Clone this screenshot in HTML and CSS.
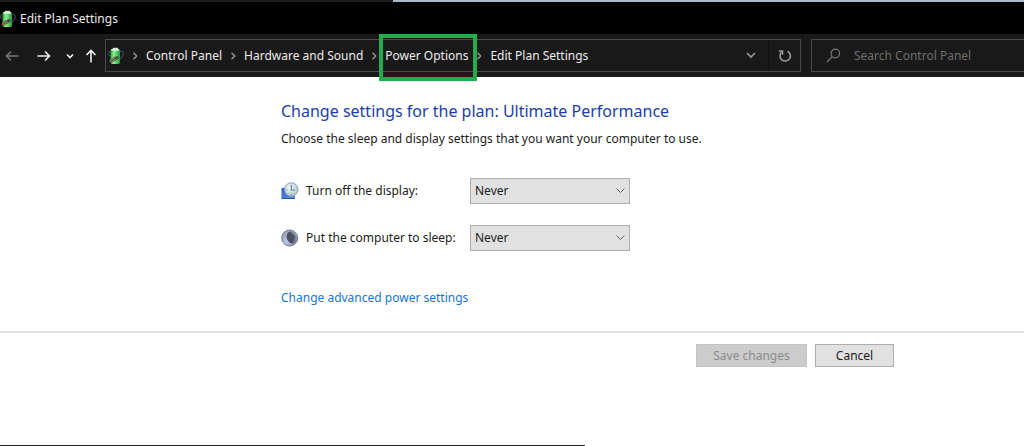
FILE: index.html
```html
<!DOCTYPE html>
<html lang="en">
<head>
<meta charset="utf-8">
<meta name="viewport" content="width=device-width, initial-scale=1">
<title>Edit Plan Settings</title>
<link rel="stylesheet" href="styles.css">
</head>
<body>
<svg class="defs" width="0" height="0" aria-hidden="true">
  <defs>
    <linearGradient id="cell" x1="0" x2="1" y1="0" y2="0">
      <stop offset="0" stop-color="#25a53a"/><stop offset=".35" stop-color="#8df094"/><stop offset="1" stop-color="#1f9a38"/>
    </linearGradient>
    <linearGradient id="screen" x1="0" x2="1" y1="0" y2="1">
      <stop offset="0" stop-color="#2e5fc9"/><stop offset="1" stop-color="#6a93e6"/>
    </linearGradient>
    <radialGradient id="face" cx=".4" cy=".35" r=".7">
      <stop offset="0" stop-color="#f4f9fb"/><stop offset="1" stop-color="#a9c0cf"/>
    </radialGradient>
    <linearGradient id="moon" x1="0" x2="1" y1="0" y2="1">
      <stop offset="0" stop-color="#8d93a8"/><stop offset=".5" stop-color="#b9c3e6"/><stop offset="1" stop-color="#7c86a6"/>
    </linearGradient>
    <symbol id="battery" viewBox="0 0 16 18">
      <path d="M11 5c3-2 5 0 4 3s-4 5-7 6M2 4C0 5 0 8 2 9" fill="none" stroke="#3c3c5a" stroke-width="1.3"/>
      <path d="M5 .8h5v2H5z" fill="#d9e6d9"/>
      <rect x="2.500" y="2" width="9.500" height="15" rx="1.800" fill="url(#cell)"/>
      <ellipse cx="7.200" cy="2.800" rx="4" ry="1.200" fill="#d4efd5"/>
      <path d="M1 14l5-4 4-1 1 2-4 3-5 2z" fill="#4d4a3d"/>
      <path d="M2 13.500l5-3M3 15l5-3" stroke="#aaa17c" stroke-width=".8"/>
    </symbol>
    <symbol id="chevron" viewBox="0 0 6 8">
      <path d="M1.500 .8L4.700 4 1.500 7.200" fill="none" stroke="currentColor" stroke-width="1.400"/>
    </symbol>
  </defs>
</svg>

<header class="titlebar">
  <svg class="battery" aria-hidden="true"><use href="#battery"/></svg>
  <span>Edit Plan Settings</span>
</header>

<nav class="toolbar" aria-label="Navigation">
  <button class="tool back" type="button" aria-label="Back" disabled><svg width="14" height="12" viewBox="0 0 14 12"><path d="M13.500 6H1.500M6 1.500L1.500 6 6 10.500"/></svg></button>
  <button class="tool forward" type="button" aria-label="Forward"><svg width="14" height="12" viewBox="0 0 14 12"><path d="M.5 6h12M8 1.500L12.500 6 8 10.500"/></svg></button>
  <button class="tool recent" type="button" aria-label="Recent locations"><svg width="8" height="6" viewBox="0 0 8 6"><path d="M1 1.500l3 3 3-3"/></svg></button>
  <button class="tool up" type="button" aria-label="Up"><svg width="12" height="14" viewBox="0 0 12 14"><path d="M6 13.500V1.500M1.500 6L6 1.500 10.500 6"/></svg></button>
  <div class="address">
    <svg class="battery" aria-hidden="true"><use href="#battery"/></svg>
    <ol class="crumbs">
      <li><svg class="chevron" aria-hidden="true"><use href="#chevron"/></svg><a href="#">Control Panel</a></li>
      <li><svg class="chevron" aria-hidden="true"><use href="#chevron"/></svg><a href="#">Hardware and Sound</a></li>
      <li><svg class="chevron" aria-hidden="true"><use href="#chevron"/></svg><a class="marked" href="#">Power Options</a></li>
      <li><svg class="chevron" aria-hidden="true"><use href="#chevron"/></svg><a href="#">Edit Plan Settings</a></li>
    </ol>
    <button class="tool history" type="button" aria-label="Previous locations"><svg width="10" height="7" viewBox="0 0 10 7"><path d="M1 1l4 4 4-4"/></svg></button>
    <button class="tool refresh" type="button" aria-label="Refresh"><svg width="14" height="14" viewBox="0 0 14 14"><path d="M9.500 2.200A5.200 5.200 0 1 1 3.500 3.200M.8 2h3.700v3.700"/></svg></button>
  </div>
  <label class="search">
    <svg width="15" height="15" viewBox="0 0 15 15" aria-hidden="true"><circle cx="9.300" cy="5.500" r="4.300"/><path d="M6.200 8.700L1 14"/></svg>
    <input type="search" placeholder="Search Control Panel" aria-label="Search Control Panel">
  </label>
</nav>

<main class="content">
  <form class="plan" id="plan">
    <h1>Change settings for the plan: Ultimate Performance</h1>
    <p class="intro">Choose the sleep and display settings that you want your computer to use.</p>
    <div class="setting">
      <svg width="18" height="18" viewBox="0 0 18 18" aria-hidden="true">
        <path d="M.5 6l13.500-1v12H.5z" fill="url(#screen)"/>
        <path d="M.5 16.500H14" stroke="#3557a8"/>
        <circle cx="10.300" cy="7.500" r="6.700" fill="url(#face)" stroke="#8ea2b2"/>
        <path d="M10.300 3v5H14" fill="none" stroke="#5f7d96" stroke-width="1.200"/>
        <path d="M5.300 7.500h1M10.300 12v1" stroke="#7890a4"/>
      </svg>
      <label for="display">Turn off the display:</label>
      <select id="display"><option>Never</option><option>5 minutes</option></select>
    </div>
    <div class="setting">
      <svg width="18" height="18" viewBox="0 0 18 18" aria-hidden="true">
        <circle cx="8.700" cy="9" r="8" fill="url(#moon)" stroke="#74798c"/>
        <ellipse cx="10.500" cy="8.500" rx="4.700" ry="6.200" fill="#4d5160" transform="rotate(-20 10.500 8.500)"/>
        <path d="M10 3.500c4 1 6 6 3 10" fill="none" stroke="#7f8391" stroke-width="1.500"/>
      </svg>
      <label for="sleep">Put the computer to sleep:</label>
      <select id="sleep"><option>Never</option><option>5 minutes</option></select>
    </div>
    <a class="advanced" href="#">Change advanced power settings</a>
  </form>
</main>

<footer class="actions">
  <button type="submit" form="plan" disabled>Save changes</button>
  <button class="cancel" type="button">Cancel</button>
</footer>
<div class="taskline"></div>
</body>
</html>
```

FILE: styles.css
```css
* { box-sizing: border-box; }

body {
  display: flex;
  flex-direction: column;
  min-height: 100vh;
  margin: 0;
  background: #fff;
  color: #1c1c1c;
  font: 12px/18px "Noto Sans", "Open Sans", sans-serif;
}

button, input, select { font: inherit; }
a { text-decoration: none; }
.defs { position: absolute; }
.battery { flex: none; width: 16px; height: 18px; }

.titlebar {
  display: flex;
  align-items: center;
  gap: 4px;
  height: 34px;
  padding-top: 3px;
  background: linear-gradient(90deg, #1c1c1c 393px, #a9b9cc 393px) top / 100% 2px no-repeat #000;
  color: #ececec;
}

.toolbar {
  display: flex;
  align-items: center;
  height: 43px;
  background: #191919;
  color: #ececec;
}

.tool {
  display: flex;
  flex: none;
  align-items: center;
  justify-content: center;
  height: 31px;
  padding: 0;
  border: 0;
  background: none;
  color: #f2f2f2;
}
.tool svg { fill: none; stroke: currentColor; stroke-width: 1.6; }
.back { width: 24px; color: #777; }
.forward { width: 40px; }
.recent { width: 12px; }
.up { width: 29px; }

.address {
  display: flex;
  flex: 1;
  align-items: center;
  height: 33px;
  padding-left: 2px;
  border: 1px solid #4a4a4a;
}

.crumbs {
  display: flex;
  flex: 1;
  margin: 0;
  padding: 0;
  list-style: none;
}
.crumbs li { display: flex; align-items: center; white-space: nowrap; }
.crumbs a { color: #ececec; }
.chevron { width: 6px; height: 8px; margin: 0 8px; color: #999; }
.marked { position: relative; }
.marked::after {
  content: "";
  position: absolute;
  inset: -13px -9px -16px -6px;
  border: 4px solid #22ac4b;
}

.history { width: 34px; color: #999; }
.refresh { width: 32px; border-left: 1px solid #111; color: #999; }

.search {
  display: flex;
  flex: 0 1 213px;
  align-items: center;
  gap: 13px;
  min-width: 0;
  height: 33px;
  margin-left: 10px;
  padding-left: 14px;
  border: 1px solid #4a4a4a;
  border-right: 0;
}
.search svg { flex: none; fill: none; stroke: #777; stroke-width: 1.2; }
.search input {
  flex: 1;
  min-width: 0;
  padding: 0;
  border: 0;
  outline: 0;
  background: none;
  color: #ececec;
}
.search input::placeholder { color: #6d6d6d; opacity: 1; }

.content {
  padding: 22px 24px 24px 281px;
  border-bottom: 2px solid #e4e4e4;
}
h1 {
  margin: 0;
  color: #1b3fa6;
  font-size: 16px;
  font-weight: 400;
  line-height: 24px;
}
.intro { margin: 7px 0 30px; }

.setting {
  display: grid;
  grid-template-columns: 18px 157px 160px;
  column-gap: 7px;
  align-items: center;
  margin-bottom: 21px;
}
.setting select {
  height: 26px;
  padding: 0 4px;
  border: 1px solid #adadad;
  border-radius: 0;
  appearance: none;
  background: url("data:image/svg+xml,%3Csvg xmlns='http://www.w3.org/2000/svg' width='9' height='6'%3E%3Cpath d='M.5.5l4 4 4-4' fill='none' stroke='%23606060'/%3E%3C/svg%3E") right 4px center no-repeat #e1e1e1;
  color: #1c1c1c;
}

.advanced { display: inline-block; margin-top: 17px; color: #1a74cf; }

.actions {
  display: flex;
  justify-content: flex-end;
  gap: 8px;
  padding: 11px 130px 0 24px;
}
.actions button {
  width: 111px;
  height: 23px;
  padding: 0;
  border: 1px solid #c4c4c4;
  background: #ccc;
  color: #8b8b8b;
}
.actions .cancel {
  width: 79px;
  border-color: #adadad;
  background: #e1e1e1;
  color: #1c1c1c;
}

.taskline { width: 57.13%; height: 1px; margin-top: auto; background: #222; }
```
